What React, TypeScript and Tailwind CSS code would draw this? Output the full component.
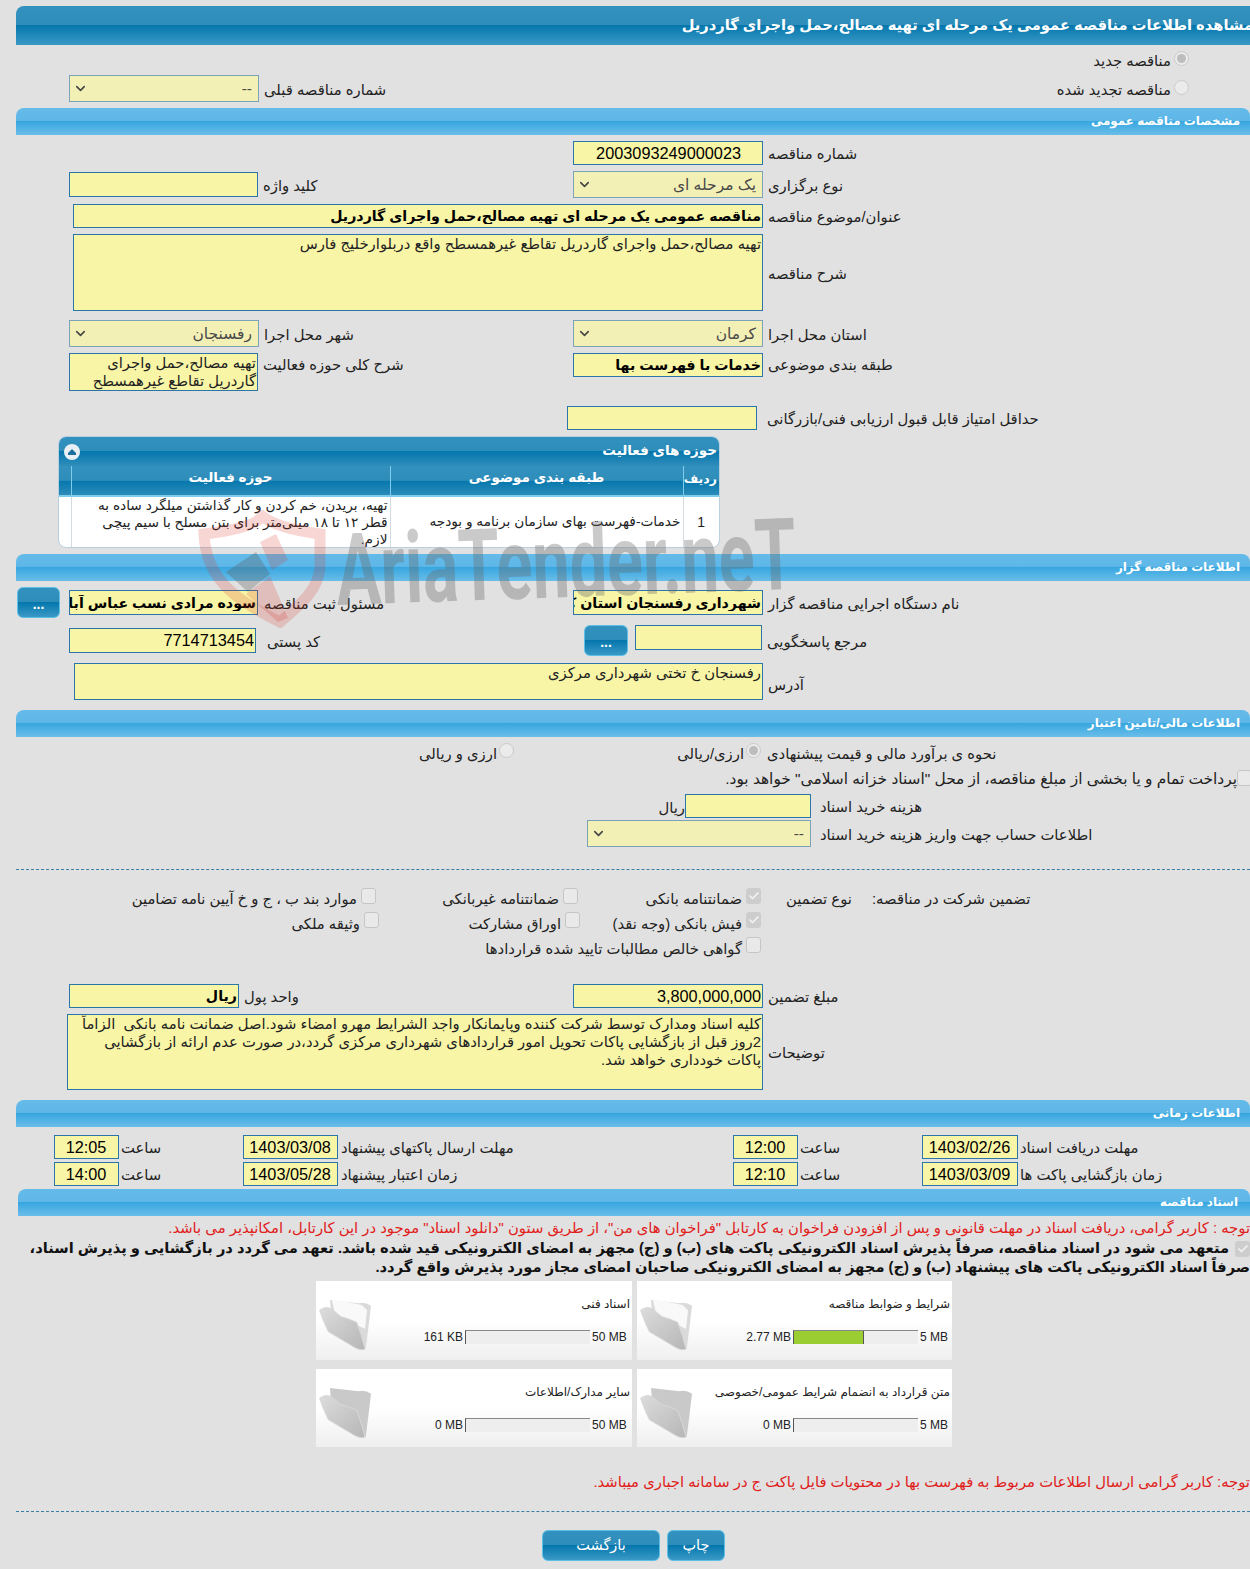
import { Check, ChevronDown } from 'lucide-react'
import type { ReactNode } from 'react'

function Section({ title, className = '' }: { title: string; className?: string }) {
  return (
    <div
      dir="rtl"
      className={`flex h-[27px] items-center rounded-tl-lg rounded-tr-lg bg-[linear-gradient(#64bbe9_0,#5fb7e8_46%,#38a7e0_50%,#6abde9_100%)] pr-[10px] text-[11.9px] font-bold text-white ${className}`}
    >
      {title}
    </div>
  )
}

function Label({ children, className = '' }: { children: ReactNode; className?: string }) {
  return (
    <span dir="rtl" className={`whitespace-nowrap pt-[2px] text-left text-[14.8px] leading-[20px] text-[#222] ${className}`}>
      {children}
    </span>
  )
}

function Field({ value, className = '' }: { value?: string; className?: string }) {
  return (
    <input
      readOnly
      dir="rtl"
      value={value ?? ''}
      className={`min-w-0 shrink-0 border border-[#2b76a8] bg-[#f8f6a6] pr-[1px] text-black outline-none ${className}`}
    />
  )
}

function Area({ value, className = '' }: { value: string; className?: string }) {
  return (
    <textarea
      readOnly
      dir="rtl"
      value={value}
      className={`block shrink-0 resize-none overflow-hidden border border-[#2b76a8] bg-[#f8f6a6] pr-[1px] text-[14.8px] leading-[18px] text-[#222] outline-none ${className}`}
    />
  )
}

function Dropdown({ value, className = '' }: { value: string; className?: string }) {
  return (
    <div className={`flex h-[27px] shrink-0 items-center justify-between border border-[#7ba3b8] bg-[#f3f0b6] pl-[3px] pr-[6px] text-[15.5px] text-[#4a4a4a] ${className}`}>
      <ChevronDown size={15} strokeWidth={2.5} className="text-[#444]" />
      <span dir="rtl">{value}</span>
    </div>
  )
}

function Radio({ on = false }: { on?: boolean }) {
  return (
    <span className="flex h-[15px] w-[15px] shrink-0 items-center justify-center rounded-full border border-[#cbcbcb] bg-[#ebebeb]">
      {on && <span className="h-[9px] w-[9px] rounded-full bg-[#bdbdbd]" />}
    </span>
  )
}

function Box({ on = false }: { on?: boolean }) {
  return (
    <span className={`flex h-[16px] w-[15px] shrink-0 items-center justify-center rounded-[3px] ${on ? 'bg-[#cdcdcd]' : 'border border-[#c6c6c6] bg-[#e9e9e9]'}`}>
      {on && <Check size={12} strokeWidth={3.5} className="text-[#f2f2f2]" />}
    </span>
  )
}

function Option({ text, on, className = '' }: { text: string; on?: boolean; className?: string }) {
  return (
    <div dir="rtl" className={`flex shrink-0 items-center gap-[4px] ${className}`}>
      <span className="-mt-[5px]"><Box on={on} /></span>
      <Label>{text}</Label>
    </div>
  )
}

function BlueButton({ children, className = '' }: { children: ReactNode; className?: string }) {
  return (
    <button className={`shrink-0 rounded-[6px] border border-[#5cc0e6] bg-[linear-gradient(#3391bf_0,#2f8dba_48%,#0577ad_50%,#3a99c6_100%)] text-white ${className}`}>
      {children}
    </button>
  )
}

function Folder({ paper = false }: { paper?: boolean }) {
  return (
    <svg viewBox="0 0 210 210" className="mt-[4px] -ml-[1px] h-[70px] w-[70px] shrink-0">
      <defs>
        <linearGradient id="flap" x1="0" y1="0" x2="1" y2="1">
          <stop offset="0" stopColor="#dcdcdc" />
          <stop offset="1" stopColor="#b6b6b6" />
        </linearGradient>
      </defs>
      <path d="M45 45 L130 55 Q150 50 168 62 L160 130 L152 192 L50 110 Z" fill={paper ? '#dadada' : '#c9c9c9'} />
      {paper && <path d="M50 42 L140 60 L156 76 L150 132 L60 85 Z" fill="#f9f9f9" />}
      <path d="M14 76 Q30 62 50 72 L78 95 Q100 100 125 112 Q140 150 150 192 Q140 198 120 188 L40 140 Q25 110 14 76 Z" fill="url(#flap)" stroke="#d8d8d8" strokeWidth="3" />
    </svg>
  )
}

function DocCard({ title, used, max, fill, maxClass, paper }: { title: string; used: string; max: string; fill?: boolean; maxClass: string; paper?: boolean }) {
  return (
    <div className="flex bg-[linear-gradient(#ffffff_0,#ffffff_50%,#efefef_100%)] text-[#222]">
      <Folder paper={paper} />
      <div className="flex min-w-0 flex-1 flex-col items-end">
        <span dir="rtl" className="mt-[14px] pr-[2px] text-[12px] leading-[18px]">{title}</span>
        <div className="mt-[15px] flex items-center text-[12px]">
          <span className="pr-[2px]">{used}</span>
          <div className="flex h-[14px] w-[125px] border-t border-l border-t-[#888] border-l-[#555] bg-[#eeeeee]">
            {fill && <div className="h-full w-[70px] border-r border-r-[#555] bg-[#9acd32]" />}
          </div>
          <span className={`pl-[2px] ${maxClass}`}>{max}</span>
        </div>
      </div>
    </div>
  )
}

function TimeRow({ a, b }: { a: string[]; b: string[] }) {
  const num = 'h-[24px] text-center text-[16.3px]'
  return (
    <div className="flex h-[24px] items-center">
      <div className="w-[54px] shrink-0" />
      <Field value={b[3]} className={`w-[65px] ${num}`} />
      <Label className="w-[124px] pl-[2px]">ساعت</Label>
      <Field value={b[1]} className={`w-[95px] ${num}`} />
      <Label className="w-[395px] pl-[3px]">{b[0]}</Label>
      <Field value={a[3]} className={`w-[65px] ${num}`} />
      <Label className="w-[124px] pl-[2px]">ساعت</Label>
      <Field value={a[1]} className={`w-[96px] ${num}`} />
      <Label className="pl-[2px]">{a[0]}</Label>
    </div>
  )
}

export default function App() {
  return (
    <div className="relative h-[1569px] w-[1250px] overflow-hidden bg-[#e1e1e1] pt-[6px] font-['Liberation_Sans','DejaVu_Sans',sans-serif]">
      <div dir="rtl" className="ml-4 flex h-[39px] items-center justify-start overflow-hidden rounded-tl-lg bg-[linear-gradient(#3391bf_0,#2f8dba_48%,#0577ad_50%,#3a99c6_100%)] text-[14.7px] font-bold whitespace-nowrap text-white">
        <span className="-mr-[3px]">مشاهده اطلاعات مناقصه عمومی یک مرحله ای تهیه مصالح،حمل واجرای گاردریل</span>
      </div>

      <div dir="rtl" className="flex h-[30px] items-center gap-[3px] pr-[61px] pb-[1px]">
        <span className="-mt-[2px]"><Radio on /></span>
        <Label>مناقصه جدید</Label>
      </div>
      <div className="flex h-[27px] items-center">
        <div className="w-[69px] shrink-0" />
        <Dropdown value="--" className="w-[190px]" />
        <Label className="ml-[5px]">شماره مناقصه قبلی</Label>
        <div dir="rtl" className="ml-auto flex items-center gap-[3px] pr-[61px]">
          <span className="-mt-[2px]"><Radio /></span>
          <Label>مناقصه تجدید شده</Label>
        </div>
      </div>

      <Section title="مشخصات مناقصه عمومی" className="mt-[6px] ml-4" />

      <div className="mt-[6px] flex h-[24px] items-center pl-[573px]">
        <Field value="2003093249000023" className="h-[24px] w-[190px] pr-[21px] text-[16.3px]" />
        <Label className="ml-[5px]">شماره مناقصه</Label>
      </div>
      <div className="mt-[6px] grid h-[27px] grid-cols-[573px_1fr]">
        <div className="flex items-center pl-[69px]">
          <Field className="h-[25px] w-[189px]" />
          <Label className="ml-[5px]">کلید واژه</Label>
        </div>
        <div className="flex items-center">
          <Dropdown value="یک مرحله ای" className="w-[190px]" />
          <Label className="ml-[5px]">نوع برگزاری</Label>
        </div>
      </div>
      <div className="mt-[6px] flex h-[24px] items-center pl-[73px]">
        <Field value="مناقصه عمومی یک مرحله ای تهیه مصالح،حمل واجرای گاردریل" className="h-[24px] w-[690px] text-[14.2px] font-bold" />
        <Label className="ml-[5px]">عنوان/موضوع مناقصه</Label>
      </div>
      <div className="mt-[6px] flex h-[77px] items-center pl-[73px]">
        <Area value="تهیه مصالح،حمل واجرای گاردریل تقاطع غیرهمسطح واقع دربلوارخلیج فارس" className="h-[77px] w-[690px]" />
        <Label className="ml-[5px]">شرح مناقصه</Label>
      </div>
      <div className="mt-[9px] grid h-[27px] grid-cols-[573px_1fr]">
        <div className="flex items-center pl-[69px]">
          <Dropdown value="رفسنجان" className="w-[190px]" />
          <Label className="ml-[5px]">شهر محل اجرا</Label>
        </div>
        <div className="flex items-center">
          <Dropdown value="کرمان" className="w-[190px]" />
          <Label className="ml-[5px]">استان محل اجرا</Label>
        </div>
      </div>
      <div className="mt-[6px] grid h-[38px] grid-cols-[573px_1fr]">
        <div className="flex items-start pl-[69px]">
          <Area value="تهیه مصالح،حمل واجرای گاردریل تقاطع غیرهمسطح" className="h-[38px] w-[189px]" />
          <Label className="ml-[5px] pt-0">شرح کلی حوزه فعالیت</Label>
        </div>
        <div className="flex items-start">
          <Field value="خدمات با فهرست بها" className="h-[24px] w-[190px] text-[14.2px] font-bold" />
          <Label className="ml-[5px] pt-0">طبقه بندی موضوعی</Label>
        </div>
      </div>
      <div className="mt-[15px] flex h-[24px] items-center pl-[567px]">
        <Field className="h-[24px] w-[190px]" />
        <Label className="ml-[10px]">حداقل امتیاز قابل قبول ارزیابی فنی/بازرگانی</Label>
      </div>

      <div className="mt-[6px] ml-[58px] h-[112px] w-[662px] overflow-hidden rounded-lg border border-[#b8cfe0] bg-white">
        <div dir="rtl" className="flex h-[29px] items-center justify-between bg-[linear-gradient(#3391bf_0,#2f8dba_48%,#0577ad_50%,#2f8dba_100%)] pr-[2px] pl-[5px] text-[13.5px] font-bold text-white">
          <span>حوزه های فعالیت</span>
          <span className="flex h-[16px] w-[16px] flex-col items-center justify-center rounded-full bg-[#e8f0f5]">
            <span className="h-0 w-0 border-x-[4px] border-b-[4px] border-x-transparent border-b-[#1d6f9e]" />
            <span className="h-[2px] w-[8px] bg-[#1d6f9e]" />
          </span>
        </div>
        <table dir="ltr" className="w-full table-fixed border-collapse">
          <colgroup>
            <col className="w-[12px]" />
            <col className="w-[319px]" />
            <col className="w-[293px]" />
            <col />
          </colgroup>
          <thead>
            <tr className="h-[30px] bg-[linear-gradient(#3391bf_0,#2f8dba_48%,#0577ad_50%,#2f8dba_100%)] text-[13.5px] font-bold text-white">
              <th className="border-r border-r-[#7fcdec]" />
              <th dir="rtl" className="border-r border-r-[#7fcdec] pb-[5px]">حوزه فعالیت</th>
              <th dir="rtl" className="border-r border-r-[#7fcdec] pb-[5px]">طبقه بندی موضوعی</th>
              <th dir="rtl" className="pr-[2px] pb-[2px] text-[12.5px]">ردیف</th>
            </tr>
          </thead>
          <tbody>
            <tr className="h-[52px] border-t-2 border-t-[#7fcdec] text-[13.7px] text-[#222]">
              <td className="border-r border-r-[#d4dbe0]" />
              <td dir="rtl" className="border-r border-r-[#d4dbe0] pr-[2px] pl-[14px] align-top leading-[17px]">
                تهیه، بریدن، خم کردن و کار گذاشتن میلگرد ساده به قطر ۱۲ تا ۱۸ میلی‌متر برای بتن مسلح با سیم پیچی لازم.
              </td>
              <td dir="rtl" className="border-r border-r-[#d4dbe0] pr-[2px]">خدمات-فهرست بهای سازمان برنامه و بودجه</td>
              <td className="text-center text-[14px]">1</td>
            </tr>
          </tbody>
        </table>
      </div>

      <Section title="اطلاعات مناقصه گزار" className="mt-[6px] ml-4" />

      <div className="mt-[6px] flex h-[31px] items-center pl-[17px]">
        <BlueButton className="h-[31px] w-[43px] pt-[4px] text-[14px] font-bold">...</BlueButton>
        <Field value="سوده مرادی نسب عباس آباد" className="ml-[9px] h-[25px] w-[189px] text-[14.2px] font-bold" />
        <Label className="ml-[6px] w-[309px]">مسئول ثبت مناقصه</Label>
        <Field value="شهرداری رفسنجان استان کرمان" className="h-[25px] w-[190px] text-[14.2px] font-bold" />
        <Label className="ml-[5px]">نام دستگاه اجرایی مناقصه گزار</Label>
      </div>
      <div className="mt-[7px] flex h-[31px] items-start pl-[69px]">
        <Field value="7714713454" className="mt-[3px] h-[25px] w-[187px] text-[16.3px]" />
        <Label className="mt-[5px] ml-[11px] w-[317px]">کد پستی</Label>
        <BlueButton className="h-[31px] w-[44px] pt-[4px] text-[14px] font-bold">...</BlueButton>
        <Field className="ml-[7px] h-[25px] w-[127px]" />
        <Label className="mt-[5px] ml-[5px]">مرجع پاسخگویی</Label>
      </div>
      <div className="mt-[7px] flex h-[37px] items-center pl-[74px]">
        <Area value="رفسنجان خ تختی شهرداری مرکزی" className="h-[37px] w-[689px]" />
        <Label className="ml-[5px] pt-[6px]">آدرس</Label>
      </div>

      <Section title="اطلاعات مالی/تامین اعتبار" className="mt-[10px] ml-4" />

      <div className="mt-[3px] flex h-[25px] items-center">
        <div dir="rtl" className="flex w-[514px] shrink-0 items-center gap-[2px]">
          <span className="-mt-[4px]"><Radio /></span>
          <Label>ارزی و ریالی</Label>
        </div>
        <div dir="rtl" className="flex w-[247px] shrink-0 items-center gap-[2px]">
          <span className="-mt-[4px]"><Radio on /></span>
          <Label>ارزی/ریالی</Label>
        </div>
        <Label className="ml-[6px]">نحوه ی برآورد مالی و قیمت پیشنهادی</Label>
      </div>
      <div dir="rtl" className="-mr-[2px] flex h-[25px] items-center">
        <Box />
        <Label className="text-[15.4px]">پرداخت تمام و یا بخشی از مبلغ مناقصه، از محل "اسناد خزانه اسلامی" خواهد بود.</Label>
      </div>
      <div className="mt-[4px] flex h-[24px] items-center pl-[661px]">
        <Label className="w-[24px] pt-[4px]">ریال</Label>
        <Field className="h-[24px] w-[126px]" />
        <Label className="ml-[9px]">هزینه خرید اسناد</Label>
      </div>
      <div className="mt-[2px] flex h-[27px] items-center pl-[587px]">
        <Dropdown value="--" className="w-[224px]" />
        <Label className="ml-[9px]">اطلاعات حساب جهت واریز هزینه خرید اسناد</Label>
      </div>

      <div className="mt-[22px] ml-4 border-t border-dashed border-t-[#3a7ea5]" />

      <div className="mt-[16px] flex h-[24px] items-center">
        <Option text="موارد بند ب ، ج و خ آیین نامه تضامین" className="w-[376px]" />
        <Option text="ضمانتنامه غیربانکی" className="w-[202px]" />
        <Option text="ضمانتنامه بانکی" on className="w-[183px]" />
        <Label className="ml-[25px] w-[86px]">نوع تضمین</Label>
        <Label>تضمین شرکت در مناقصه:</Label>
      </div>
      <div className="flex h-[25px] items-center">
        <Option text="وثیقه ملکی" className="w-[379px]" />
        <Option text="اوراق مشارکت" className="w-[201px]" />
        <Option text="فیش بانکی (وجه نقد)" on className="w-[181px]" />
      </div>
      <div className="flex h-[25px] items-center">
        <Option text="گواهی خالص مطالبات تایید شده قراردادها" className="w-[761px]" />
      </div>

      <div className="mt-[24px] flex h-[24px] items-center pl-[69px]">
        <Field value="ریال" className="h-[24px] w-[170px] text-[14.2px] font-bold" />
        <Label className="ml-[5px] w-[329px]">واحد پول</Label>
        <Field value="3,800,000,000" className="h-[24px] w-[190px] text-[16.3px]" />
        <Label className="ml-[5px]">مبلغ تضمین</Label>
      </div>
      <div className="mt-[6px] flex h-[76px] items-center pl-[67px]">
        <Area
          value="کلیه اسناد ومدارک توسط شرکت کننده وپایمانکار واجد الشرایط مهرو امضاء شود.اصل ضمانت نامه بانکی  الزاماً 2روز قبل از بازگشایی پاکات تحویل امور قراردادهای شهرداری مرکزی گردد،در صورت عدم ارائه از بازگشایی پاکات خودداری خواهد شد."
          className="h-[76px] w-[696px] pl-[2px]"
        />
        <Label className="ml-[5px]">توضیحات</Label>
      </div>

      <Section title="اطلاعات زمانی" className="mt-[10px] ml-4" />

      <div className="mt-[8px]">
        <TimeRow a={['مهلت دریافت اسناد', '1403/02/26', 'ساعت', '12:00']} b={['مهلت ارسال پاکتهای پیشنهاد', '1403/03/08', 'ساعت', '12:05']} />
      </div>
      <div className="mt-[3px]">
        <TimeRow a={['زمان بازگشایی پاکت ها', '1403/03/09', 'ساعت', '12:10']} b={['زمان اعتبار پیشنهاد', '1403/05/28', 'ساعت', '14:00']} />
      </div>

      <Section title="اسناد مناقصه" className="mt-[3px] ml-[18px] pr-[12px]" />

      <div dir="rtl" className="mt-[3px] flex h-[18px] items-center whitespace-nowrap text-[14.8px] text-[#e0201b]">
        توجه : کاربر گرامی، دریافت اسناد در مهلت قانونی و پس از افزودن فراخوان به کارتابل "فراخوان های من"، از طریق ستون "دانلود اسناد" موجود در این کارتابل، امکانپذیر می باشد.
      </div>
      <div dir="rtl" className="mt-[2px] flex h-[19px] items-center gap-[6px] whitespace-nowrap text-[14.7px] font-bold text-[#111]">
        <Box on />
        <span>متعهد می شود در اسناد مناقصه، صرفاً پذیرش اسناد الکترونیکی پاکت های (ب) و (ج) مجهز به امضای الکترونیکی قید شده باشد. تعهد می گردد در بازگشایی و پذیرش اسناد،</span>
      </div>
      <div dir="rtl" className="flex h-[18px] items-center whitespace-nowrap text-[14.7px] font-bold text-[#111]">
        صرفاً اسناد الکترونیکی پاکت های پیشنهاد (ب) و (ج) مجهز به امضای الکترونیکی صاحبان امضای مجاز مورد پذیرش واقع گردد.
      </div>

      <div className="mt-[5px] ml-[316px] grid w-[636px] grid-cols-[316px_315px] grid-rows-[79px_78px] gap-x-[5px] gap-y-[9px]">
        <DocCard title="اسناد فنی" used="161 KB" max="50 MB" maxClass="w-[42px]" paper />
        <DocCard title="شرایط و ضوابط مناقصه" used="2.77 MB" max="5 MB" maxClass="w-[34px]" fill paper />
        <DocCard title="سایر مدارک/اطلاعات" used="0 MB" max="50 MB" maxClass="w-[42px]" />
        <DocCard title="متن قرارداد به انضمام شرایط عمومی/خصوصی" used="0 MB" max="5 MB" maxClass="w-[34px]" />
      </div>

      <div dir="rtl" className="mt-[26px] flex h-[18px] items-center whitespace-nowrap text-[14.8px] text-[#e0201b]">
        توجه: کاربر گرامی ارسال اطلاعات مربوط به فهرست بها در محتویات فایل پاکت ج در سامانه اجباری میباشد.
      </div>

      <div className="mt-[20px] ml-4 border-t border-dashed border-t-[#3a7ea5]" />

      <div className="mt-[18px] flex h-[31px] gap-[7px] pl-[542px] text-[14.5px]">
        <BlueButton className="w-[118px]"><span dir="rtl">بازگشت</span></BlueButton>
        <BlueButton className="w-[58px]"><span dir="rtl">چاپ</span></BlueButton>
      </div>

      {/* watermark sits over the page, very faint */}
      <div className="pointer-events-none absolute top-[510px] left-[196px] h-[120px] w-[620px]">
        <svg viewBox="0 0 132 118" className="absolute top-0 left-0 h-[118px] w-[132px]">
          <path d="M8 24 Q60 18 66 6 Q80 18 124 24 V58 C122 82 100 98 84 112 C44 92 10 72 8 24 Z" fill="none" stroke="#d9302a" strokeOpacity="0.2" strokeWidth="11" />
          <path d="M30 62 L60 42 L74 64 L52 82 Z" fill="#555" fillOpacity="0.3" />
          <path d="M64 32 L80 24 L92 50 L76 60 Z M50 84 L74 66 L92 108 L82 112 Z" fill="#d9302a" fillOpacity="0.2" />
        </svg>
        <span className="absolute top-[-14px] left-[140px] origin-left scale-x-[0.665] -rotate-2 font-['Roboto',sans-serif] text-[100px] font-bold whitespace-nowrap text-[#666]/35">
          AriaTender.neT
        </span>
      </div>
    </div>
  )
}
